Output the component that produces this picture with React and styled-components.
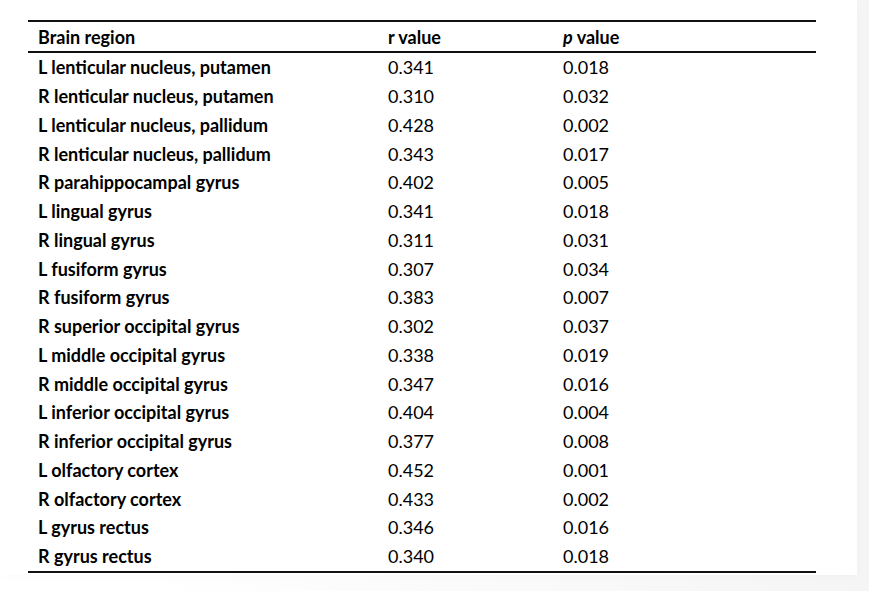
import styled, { createGlobalStyle } from "styled-components";

const GlobalStyle = createGlobalStyle`
    html, body {
        margin: 0;
        padding: 0;
    }
    body {
        width: 869px;
        height: 591px;
        overflow: hidden;
        background: linear-gradient(to right, #ffffff 15%, #f5f5f5 100%);
        font-family: Lato, "Liberation Sans", sans-serif;
        color: #000;
    }
`;

const Page = styled.div`
    width: 857px;
    height: 575px;
    background: #fff;
    box-shadow: 2px 2px 8px rgba(0, 0, 0, 0.02);
    padding: 20px 0 0 28px;
    box-sizing: border-box;
`;

const Table = styled.table`
    width: 788px;
    table-layout: fixed;
    border-collapse: collapse;
    font-size: 18px;
    border-top: 2px solid #111;
    border-bottom: 2px solid #111;
`;

const HeadCell = styled.th`
    text-align: left;
    font-weight: 700;
    height: 31px;
    padding: 0 0 0 10px;
    border-bottom: 2px solid #111;
    width: ${props => props.w || "auto"};
    box-sizing: border-box;
`;

const Cell = styled.td`
    height: 28.75px;
    padding: 0 0 0 10px;
    font-weight: ${props => (props.bold ? 700 : 400)};
    white-space: nowrap;
`;

const rows = [
    ["L lenticular nucleus, putamen", "0.341", "0.018"],
    ["R lenticular nucleus, putamen", "0.310", "0.032"],
    ["L lenticular nucleus, pallidum", "0.428", "0.002"],
    ["R lenticular nucleus, pallidum", "0.343", "0.017"],
    ["R parahippocampal gyrus", "0.402", "0.005"],
    ["L lingual gyrus", "0.341", "0.018"],
    ["R lingual gyrus", "0.311", "0.031"],
    ["L fusiform gyrus", "0.307", "0.034"],
    ["R fusiform gyrus", "0.383", "0.007"],
    ["R superior occipital gyrus", "0.302", "0.037"],
    ["L middle occipital gyrus", "0.338", "0.019"],
    ["R middle occipital gyrus", "0.347", "0.016"],
    ["L inferior occipital gyrus", "0.404", "0.004"],
    ["R inferior occipital gyrus", "0.377", "0.008"],
    ["L olfactory cortex", "0.452", "0.001"],
    ["R olfactory cortex", "0.433", "0.002"],
    ["L gyrus rectus", "0.346", "0.016"],
    ["R gyrus rectus", "0.340", "0.018"],
];

export default function App() {
    return (
        <Page>
            <GlobalStyle />
            <Table>
                <thead>
                    <tr>
                        <HeadCell w="350px">Brain region</HeadCell>
                        <HeadCell w="175px">r value</HeadCell>
                        <HeadCell><i>p</i> value</HeadCell>
                    </tr>
                </thead>
                <tbody>
                    {rows.map(([region, r, p]) => (
                        <tr key={region}>
                            <Cell bold>{region}</Cell>
                            <Cell>{r}</Cell>
                            <Cell>{p}</Cell>
                        </tr>
                    ))}
                </tbody>
            </Table>
        </Page>
    );
}
